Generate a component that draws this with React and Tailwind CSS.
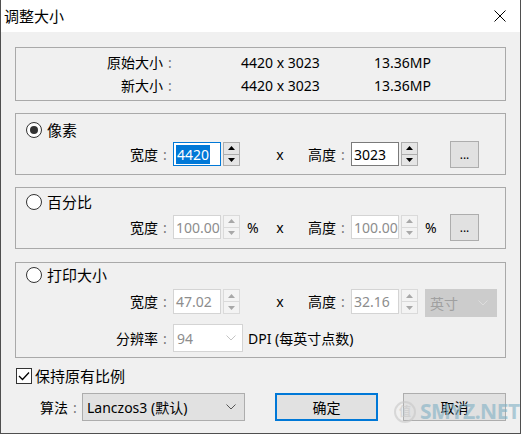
import React from "react";

const font = "font-['Noto_Sans','Noto_Sans_CJK_SC',sans-serif]";

function Colon() {
  return <span className="inline-block w-[14px] text-center text-[#777777]">:</span>;
}

function Spin({ disabled = false, tall = false }) {
  const fill = disabled ? "#a8a8a8" : "#000000";
  return (
    <div
      className={`ml-[2px] flex w-[17px] flex-col border ${tall ? "h-[25px]" : "h-[24px]"} ${
        disabled ? "border-[#dadada] bg-[#f3f3f3]" : "border-[#adadad] bg-[#e5e5e5]"
      }`}
    >
      <div
        className={`flex flex-1 items-center justify-center border-b ${
          disabled ? "border-[#dadada]" : "border-[#adadad]"
        }`}
      >
        <svg width="7" height="4" viewBox="0 0 7 4">
          <polygon points="0,4 3.5,0 7,4" fill={fill} />
        </svg>
      </div>
      <div className="flex flex-1 items-center justify-center">
        <svg width="7" height="4" viewBox="0 0 7 4">
          <polygon points="0,0 3.5,4 7,0" fill={fill} />
        </svg>
      </div>
    </div>
  );
}

function Field({ value, disabled = false, focused = false, tall = false }) {
  return (
    <div
      className={`ml-[1px] flex w-[48px] items-center bg-white pl-[2px] text-[14px] ${tall ? "h-[25px]" : "h-[24px]"} ${
        focused
          ? "border border-[#0078d7] text-white"
          : disabled
          ? "border border-[#d4d4d4] text-[#8d8d8d]"
          : "border border-[#7a7a7a] text-black"
      }`}
    >
      {focused ? <span className="bg-[#0078d7] px-[1px] leading-[19px]">{value}</span> : value}
    </div>
  );
}

function Chevron({ color }) {
  return (
    <svg width="10" height="6" viewBox="0 0 10 6">
      <polyline points="0.5,0.5 5,5 9.5,0.5" fill="none" stroke={color} strokeWidth="1" />
    </svg>
  );
}

function DotsButton() {
  return (
    <div className="ml-[12px] flex h-[27px] w-[29px] items-center justify-center border border-[#adadad] bg-[#e1e1e1] pt-[2px] text-[12px] leading-none">
      ...
    </div>
  );
}

function Radio({ checked, label }) {
  return (
    <div className="flex h-[20px] items-center pl-[10px]">
      <div className="flex h-[16px] w-[16px] items-center justify-center rounded-full border border-[#333333] bg-white">
        {checked && <div className="h-[8px] w-[8px] rounded-full bg-[#333333]" />}
      </div>
      <span className="ml-[5px] text-[15px] leading-none">{label}</span>
    </div>
  );
}

function Label({ children, tall = false }) {
  return (
    <div className={`w-[156px] text-right text-[14px] ${tall ? "leading-[25px]" : ""}`}>
      {children}
      <Colon />
    </div>
  );
}

function Label2({ children, tall = false }) {
  return (
    <div className={`w-[50px] text-right text-[14px] ${tall ? "leading-[25px]" : ""}`}>
      {children}
      <Colon />
    </div>
  );
}

function Cross({ tall = false }) {
  return <div className={`w-[40px] text-center text-[14px] ${tall ? "leading-[25px]" : ""}`}>x</div>;
}

function Unit({ children }) {
  return <div className="w-[20px] pl-[7px] text-[14px]">{children}</div>;
}

export default function App() {
  return (
    <div
      className={`relative flex h-[434px] w-[521px] flex-col overflow-hidden border-x border-b border-[#4f4f4f] bg-[#f0f0f0] text-black ${font}`}
    >
      {/* title bar */}
      <div className="flex h-[32px] shrink-0 items-center justify-between bg-white pl-[3px] pr-[14px]">
        <span className="text-[15px]">调整大小</span>
        <svg width="12" height="12" viewBox="0 0 12 12">
          <line x1="0.5" y1="0.5" x2="11.5" y2="11.5" stroke="#000" strokeWidth="1" />
          <line x1="11.5" y1="0.5" x2="0.5" y2="11.5" stroke="#000" strokeWidth="1" />
        </svg>
      </div>

      <div className="flex flex-col px-[14px]">
        {/* info */}
        <div className="mt-[15px] flex h-[54px] flex-col border border-[#a9a9a9] py-[3px] text-[14px]">
          <div className="flex h-[23px] items-center">
            <div className="w-[161px] text-right">
              原始大小
              <Colon />
            </div>
            <div className="ml-[64px] w-[133px]">4420 x 3023</div>
            <div>13.36MP</div>
          </div>
          <div className="flex h-[23px] items-center">
            <div className="w-[161px] text-right">
              新大小
              <Colon />
            </div>
            <div className="ml-[64px] w-[133px]">4420 x 3023</div>
            <div>13.36MP</div>
          </div>
        </div>

        {/* pixels */}
        <div className="mt-[12px] flex h-[62px] flex-col border border-[#a9a9a9] pt-[6px]">
          <Radio checked label="像素" />
          <div className="mt-[2px] flex h-[24px] items-center">
            <Label>宽度</Label>
            <Field value="4420" focused />
            <Spin />
            <Unit />
            <Cross />
            <Label2>高度</Label2>
            <Field value="3023" />
            <Spin />
            <Unit />
            <DotsButton />
          </div>
        </div>

        {/* percent */}
        <div className="mt-[12px] flex h-[62px] flex-col border border-[#a9a9a9] pt-[4px]">
          <Radio label="百分比" />
          <div className="mt-[3px] flex h-[24px] items-center">
            <Label>宽度</Label>
            <Field value="100.00" disabled />
            <Spin disabled />
            <Unit>%</Unit>
            <Cross />
            <Label2>高度</Label2>
            <Field value="100.00" disabled />
            <Spin disabled />
            <Unit>%</Unit>
            <DotsButton />
          </div>
        </div>

        {/* print size */}
        <div className="mt-[13px] flex h-[96px] flex-col border border-[#a9a9a9] pt-[2px]">
          <Radio label="打印大小" />
          <div className="mt-[4px] flex h-[28px] items-start">
            <Label tall>宽度</Label>
            <Field value="47.02" disabled tall />
            <Spin disabled tall />
            <div className="w-[20px]" />
            <Cross tall />
            <Label2 tall>高度</Label2>
            <Field value="32.16" disabled tall />
            <Spin disabled tall />
            <div className="ml-[7px] flex h-[28px] w-[72px] items-center justify-between border border-[#cccccc] bg-[#cccccc] pl-[4px] pr-[8px] text-[14px] text-[#a0a0a0]">
              <span>英寸</span>
              <Chevron color="#dddddd" />
            </div>
          </div>
          <div className="mt-[7px] flex h-[28px] items-center">
            <Label>分辨率</Label>
            <div className="ml-[1px] flex h-[28px] w-[70px] items-center justify-between border border-[#d4d4d4] bg-white pl-[3px] pr-[6px] text-[14px] text-[#8d8d8d]">
              <span>94</span>
              <Chevron color="#c4c4c4" />
            </div>
            <span className="ml-[5px] text-[14px]">DPI (每英寸点数)</span>
          </div>
        </div>

        {/* keep ratio */}
        <div className="mt-[10px] flex h-[16px] items-center pl-[1px]">
          <div className="flex h-[16px] w-[16px] items-center justify-center border border-[#333333] bg-white">
            <svg width="12" height="10" viewBox="0 0 12 10">
              <polyline points="1,5 4.5,8.5 11,1.5" fill="none" stroke="#000" strokeWidth="1.3" />
            </svg>
          </div>
          <span className="ml-[3px] text-[15px]">保持原有比例</span>
        </div>

        {/* algorithm + buttons */}
        <div className="mt-[9px] flex h-[28px] items-center">
          <div className="ml-[25px] w-[42px] text-[14px]">
            算法
            <Colon />
          </div>
          <div className="flex h-[28px] w-[163px] items-center justify-between border border-[#adadad] bg-[#e1e1e1] pl-[4px] pr-[8px] text-[14px]">
            <span>Lanczos3 (默认)</span>
            <Chevron color="#555555" />
          </div>
          <div className="ml-[30px] flex h-[28px] w-[103px] items-center justify-center border-2 border-[#0078d7] bg-[#e1e1e1] text-[14px]">
            确定
          </div>
          <div className="ml-[25px] flex h-[28px] w-[103px] items-center justify-center border border-[#adadad] bg-[#e1e1e1] text-[14px]">
            取消
          </div>
        </div>
      </div>

      {/* watermark */}
      <div className="pointer-events-none absolute left-[393px] top-[396px] flex items-center gap-[4px] opacity-60">
        <div className="flex h-[22px] w-[22px] items-center justify-center rounded-full border-2 border-[#c8c8c8] text-[12px] font-bold text-[#c8c8c8]">
          值
        </div>
        <span className="text-[21px] font-bold tracking-[-0.5px] text-[#7fb0c4]">SMYZ.NET</span>
      </div>
    </div>
  );
}
